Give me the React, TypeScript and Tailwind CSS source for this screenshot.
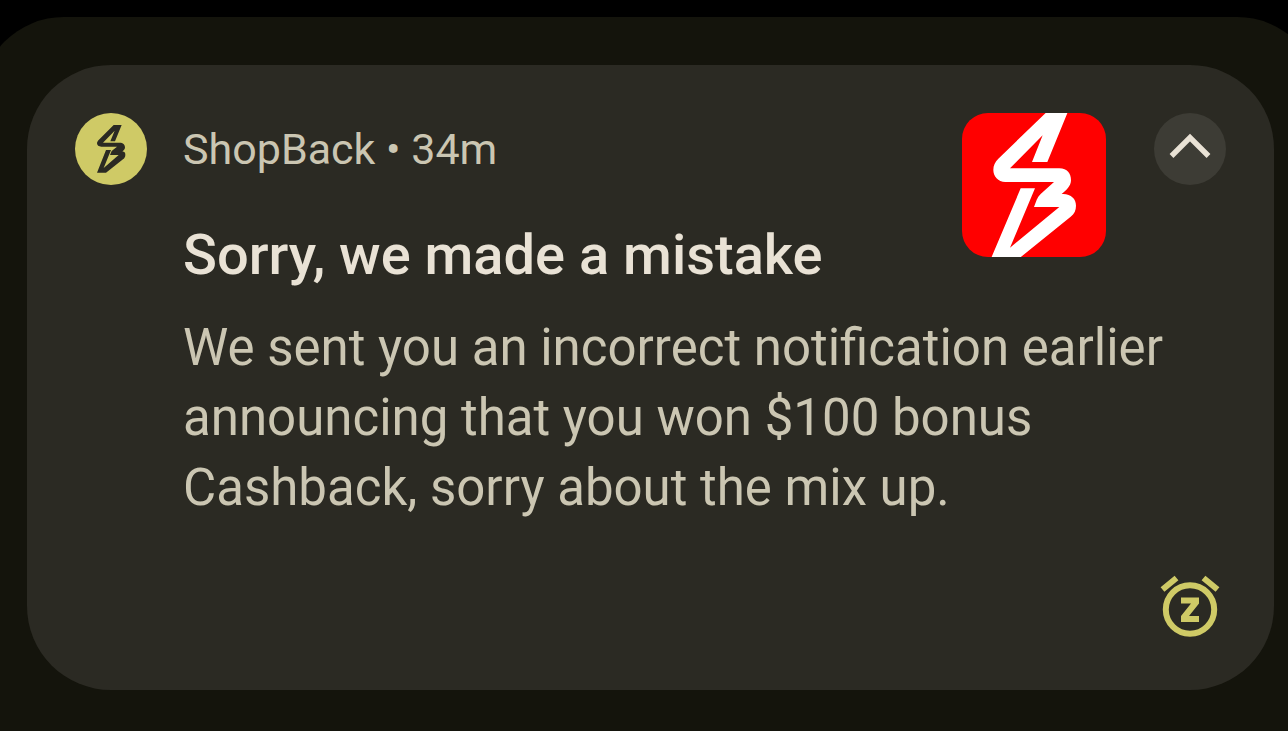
import type { ReactNode } from 'react';

// Types
interface NotificationProps {
  app: string;
  age: string;
  title: string;
  children: ReactNode;
}

// Icons
const AppBadge = () => (
  <svg viewBox="0 0 216 216" className="size-[72px]" aria-hidden="true">
    <circle cx="108" cy="108" r="108" fill="#cfca66" />
    <path
      fill="#2b2a23"
      d="M116 36H140L120 85H106L119 53L84 89H134C144 89 150 95 150 103C150 108 147 112 142 115C148 116 151 119 151 125C151 131 149 135 144 139L93 179H66L93 111H108L86 165L131 126H105L110 114L126 101H79C71 101 66 97 66 91C66 88 68 84 71 81Z"
    />
  </svg>
);

const AppLogo = () => (
  <svg viewBox="0 0 432 432" className="size-36 rounded-[26px] bg-[#ff0000]" aria-hidden="true">
    <path
      fill="#fff"
      d="M253 -2H317L256 147H210L242 67L144 166H292C316 166 327 182 327 202C327 219 313 232 299 243C326 241 342 257 342 278C342 292 337 302 326 311L174 434H88L176 226H219L144 404L292 282H216C222 266 226 252 236 243L276 207H130C108 207 94 190 94 171C94 157 99 147 109 137Z"
    />
  </svg>
);

const ChevronUp = () => (
  <svg viewBox="0 0 72 72" className="size-[72px]" fill="none" aria-hidden="true">
    <path d="M17.500 43L36 24.500L54.500 43" stroke="#e9e2d5" strokeWidth="5.4" />
  </svg>
);

const SnoozeIcon = () => (
  <svg viewBox="0 0 72 72" className="size-[72px]" fill="none" stroke="#cfca66" aria-hidden="true">
    <circle cx="36" cy="38.5" r="24.2" strokeWidth="6" />
    <path d="M8.5 18.5L22.5 7M49.5 7L63.5 18.5" strokeWidth="6" />
    <path d="M27 26.5H45V32.500L35 45H45V51H27V45L37 32.500H27Z" fill="#cfca66" stroke="none" />
  </svg>
);

const Notification = ({ app, age, title, children }: NotificationProps) => (
  <article className="grid grid-cols-[72px_1fr_144px_120px] rounded-[84px] bg-[#2b2a23] px-12 pt-12 pb-[47px] text-[#cbc6b2]">
    <AppBadge />
    <p className="ml-9 self-center text-[43px] leading-[48px]">
      {app} • {age}
    </p>
    <div className="row-span-2">
      <AppLogo />
    </div>
    <button type="button" aria-label="Collapse" className="ml-12 size-[72px] rounded-full bg-[#3d3c35]">
      <ChevronUp />
    </button>
    <h2 className="col-start-2 mt-9 ml-9 text-[56px] leading-[68px] font-medium text-[#e9e2d5]">{title}</h2>
    <p className="col-span-3 col-start-2 mt-6 ml-9 text-[51px] leading-[70px]">{children}</p>
    <button type="button" aria-label="Snooze" className="col-span-4 mt-12 size-[72px] justify-self-end">
      <SnoozeIcon />
    </button>
  </article>
);

export default function App() {
  return (
    <div className="min-h-screen overflow-hidden bg-black pt-[17px] font-['Roboto',sans-serif]">
      {/* The shade runs past both screen edges */}
      <main className="-mr-[33px] -ml-5 min-h-screen rounded-t-[84px] bg-[#14140c] px-[47px] pt-12">
        <Notification app="ShopBack" age="34m" title="Sorry, we made a mistake">
          We sent you an incorrect notification earlier announcing that you won $100 bonus Cashback, sorry about the
          mix up.
        </Notification>
      </main>
    </div>
  );
}
